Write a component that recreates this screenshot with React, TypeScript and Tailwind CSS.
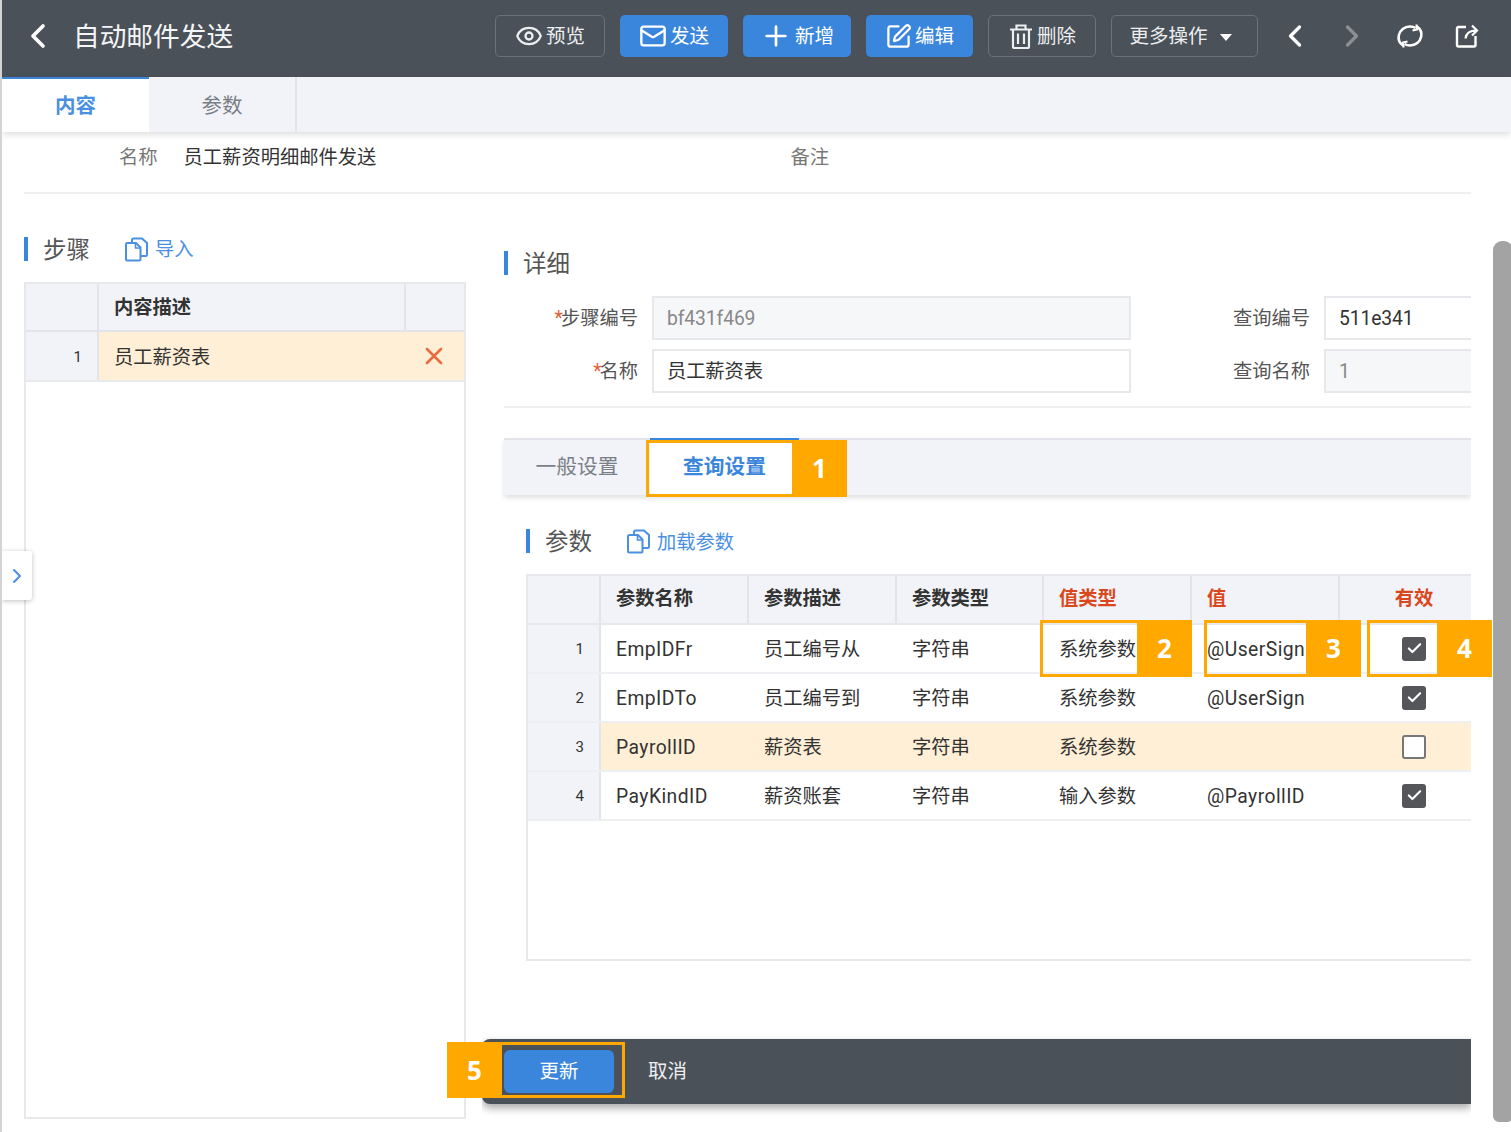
import { Check, ChevronLeft, ChevronRight, Eye, Mail, Plus, SquarePen, X } from "lucide-react";

const FONT = "font-['Roboto','Noto_Sans_CJK_SC',sans-serif]";

type ToolButtonProps = {
  label: string;
  icon?: React.ReactNode;
  primary?: boolean;
  className: string;
};

function ToolButton({ label, icon, primary, className }: ToolButtonProps) {
  return (
    <button
      className={`flex h-[42px] items-center justify-center gap-[3px] rounded-[5px] text-[19.5px] ${
        primary ? "bg-[#3b86dd] text-white" : "border border-[#6b7279] text-[#eceef0]"
      } ${className}`}
    >
      {icon}
      <span className="pt-[2px]">{label}</span>
    </button>
  );
}

function TrashIcon() {
  return (
    <svg width="26" height="28" viewBox="0 0 26 28" fill="none" stroke="currentColor" strokeWidth="2.2">
      <path d="M2 7.500h22M8.500 7V3.500h9V7M5 8v16.500a1.500 1.500 0 0 0 1.500 1.500h13a1.500 1.500 0 0 0 1.500-1.500V8M10 11.500v10.500M16 11.500v10.500" />
    </svg>
  );
}

function RefreshIcon() {
  return (
    <svg width="28" height="28" viewBox="0 0 28 28" fill="none" stroke="currentColor" strokeWidth="2.6">
      <path d="M7 23.500C3.500 21 2 17.500 2.800 13.500C3.800 8 8.500 4.500 14 4.500C16 4.500 18 5 19.500 6" />
      <path d="M21 4.500C24.500 7 26 10.500 25.200 14.500C24.200 20 19.500 23.500 14 23.500C12 23.500 10 23 8.500 22" />
      <path d="M16.500 8.500L21 7.500L20.500 2.500M11.500 19.500L7 20.500L7.500 25.500" strokeWidth="2.2" />
    </svg>
  );
}

function ShareIcon() {
  return (
    <svg width="26" height="26" viewBox="0 0 26 26" fill="none" stroke="currentColor" strokeWidth="2.4">
      <path d="M12 4H4.500A1.500 1.500 0 0 0 3 5.500V22a1.500 1.500 0 0 0 1.500 1.500H20a1.500 1.500 0 0 0 1.500-1.500V13" />
      <path d="M11.500 15.500C12 10.500 15 7.500 22.500 7.500M18 2.500l5 5-5 5" strokeWidth="2.2" />
    </svg>
  );
}

function ImportIcon() {
  return (
    <svg width="25" height="25" viewBox="0 0 25 25" fill="none" stroke="#4a90e2" strokeWidth="2" className="shrink-0">
      <path d="M3.500 6H12l4.500 4.500V22a1.500 1.500 0 0 1-1.500 1.500H3.500A1.500 1.500 0 0 1 2 22V7.500A1.500 1.500 0 0 1 3.500 6Z" />
      <path d="M8 6V3a1.500 1.500 0 0 1 1.500-1.500H18L23 6v11.500a1.500 1.500 0 0 1-1.500 1.500H17" />
      <path d="M11.500 6.500V11H16" strokeWidth="1.600" />
    </svg>
  );
}

function SectionTitle({ label }: { label: string }) {
  return (
    <div className="flex h-[26px] items-center">
      <span className="h-[24px] w-[4px] bg-[#3b86dd]" />
      <span className="ml-[15px] pt-[3px] text-[23.5px] text-[#555]">{label}</span>
    </div>
  );
}

type FieldProps = {
  label: string;
  required?: boolean;
  value: string;
  readOnly?: boolean;
  className: string;
};

function Field({ label, required, value, readOnly, className }: FieldProps) {
  return (
    <div className="flex items-center">
      <label className={`shrink-0 pt-[2px] text-right text-[19.3px] text-[#555] ${className}`}>
        {required && <span className="mr-[-2px] text-[#e2603a]">*</span>}
        {label}
      </label>
      <div
        className={`ml-[14px] flex h-[44px] flex-1 items-center border-2 border-[#e6e8ec] pl-[13px] pt-[3px] text-[19.3px] tracking-[-0.1px] ${
          readOnly ? "bg-[#f6f7f9] text-[#888]" : "bg-white text-[#333]"
        }`}
      >
        {value}
      </div>
    </div>
  );
}

function Checkbox({ checked }: { checked: boolean }) {
  if (!checked) {
    return <span className="h-[24px] w-[24px] rounded-[3px] border-2 border-[#777] bg-white" />;
  }
  return (
    <span className="flex h-[24px] w-[24px] items-center justify-center rounded-[3px] bg-[#555659]">
      <Check size={17} strokeWidth={3} className="text-white" />
    </span>
  );
}

const params = [
  { id: 1, name: "EmpIDFr", desc: "员工编号从", type: "字符串", valueType: "系统参数", value: "@UserSign", on: true },
  { id: 2, name: "EmpIDTo", desc: "员工编号到", type: "字符串", valueType: "系统参数", value: "@UserSign", on: true },
  { id: 3, name: "PayrollID", desc: "薪资表", type: "字符串", valueType: "系统参数", value: "", on: false, active: true },
  { id: 4, name: "PayKindID", desc: "薪资账套", type: "字符串", valueType: "输入参数", value: "@PayrollID", on: true },
];

const headCell = "flex items-center border-r-2 border-[#e2e4ea] pl-[15px] font-bold";
const bodyCell = "flex items-center pl-[15px] pt-[4px]";
const paramCols = "grid grid-cols-[73px_148px_148px_147px_148px_148px_148px]";

function ParamTable() {
  return (
    <div className="h-[387px] w-[960px] border-b-2 border-l-2 border-[#e6e8ec] text-[19.3px] text-[#333]">
      <div className={`${paramCols} h-[51px] border-y-2 border-[#e6e8ec] bg-[#f1f3f8]`}>
        <div className="border-r-2 border-[#e2e4ea]" />
        <div className={headCell}>参数名称</div>
        <div className={headCell}>参数描述</div>
        <div className={headCell}>参数类型</div>
        <div className={`${headCell} text-[#d9481c]`}>值类型</div>
        <div className={`${headCell} text-[#d9481c]`}>值</div>
        <div className="flex items-center justify-center font-bold text-[#d9481c]">有效</div>
      </div>
      {params.map((row) => (
        <div key={row.id} className={`${paramCols} h-[49px] border-b-2 border-[#eeeff2] ${row.active ? "bg-[#ffefd6]" : "bg-white"}`}>
          <div className="flex items-center justify-end border-r-2 border-[#e2e4ea] bg-[#f1f3f8] pr-[15px] pt-[1px] text-[15px]">{row.id}</div>
          <div className={`${bodyCell} tracking-[0.45px]`}>{row.name}</div>
          <div className={bodyCell}>{row.desc}</div>
          <div className={bodyCell}>{row.type}</div>
          <div className={bodyCell}>{row.valueType}</div>
          <div className={`${bodyCell} tracking-[0.45px]`}>{row.value}</div>
          <div className="flex items-center justify-center">
            <Checkbox checked={row.on} />
          </div>
        </div>
      ))}
    </div>
  );
}

function Callout({ num, left, className }: { num: number; left?: boolean; className: string }) {
  return (
    <div className={`absolute flex border-[3px] border-[#ffa800] ${left ? "justify-start" : "justify-end"} ${className}`}>
      <span
        className={`flex h-full w-[55px] shrink-0 items-center justify-center bg-[#ffa800] font-['Open_Sans'] text-[26px] font-bold text-white ${
          left ? "-ml-[3px]" : "-mr-[3px]"
        }`}
      >
        {num}
      </span>
    </div>
  );
}

export default function App() {
  return (
    <div className={`relative h-[1132px] w-[1511px] overflow-hidden border-l-2 border-[#d4d4d4] bg-white ${FONT}`}>
      <header className="flex h-[77px] items-center bg-[#4a5158] pb-[5px] text-white">
        <ChevronLeft size={40} strokeWidth={2.2} className="ml-[16px] shrink-0" />
        <h1 className="ml-[15px] w-[422px] pt-[3px] text-[26.7px] text-[#f4f5f6]">自动邮件发送</h1>
        <ToolButton label="预览" className="w-[110px]" icon={<Eye size={28} strokeWidth={2} />} />
        <ToolButton label="发送" primary className="ml-[15px] w-[108px]" icon={<Mail size={28} strokeWidth={2} />} />
        <ToolButton label="新增" primary className="ml-[15px] w-[108px]" icon={<Plus size={32} strokeWidth={2} />} />
        <ToolButton label="编辑" primary className="ml-[15px] w-[107px]" icon={<SquarePen size={27} strokeWidth={2} />} />
        <ToolButton label="删除" className="ml-[15px] w-[108px]" icon={<TrashIcon />} />
        <button className="ml-[15px] flex h-[42px] w-[147px] items-center justify-center gap-[12px] rounded-[5px] border border-[#6b7279] pr-[8px] pt-[2px] text-[19.5px] text-[#eceef0]">
          更多操作
          <span className="h-0 w-0 border-x-[6px] border-t-[7px] border-x-transparent border-t-white" />
        </button>
        <ChevronLeft size={36} strokeWidth={2.2} className="ml-[19px] shrink-0" />
        <ChevronRight size={36} strokeWidth={2.2} className="ml-[21px] shrink-0 text-[#8a9096]" />
        <span className="ml-[26px] shrink-0"><RefreshIcon /></span>
        <span className="ml-[30px] shrink-0"><ShareIcon /></span>
      </header>

      <nav className="relative z-10 flex h-[55px] bg-[#f1f3f8] text-[20.5px] shadow-[0_3px_6px_rgba(0,0,0,0.12)]">
        <div className="flex w-[147px] items-center justify-center border-t-2 border-[#3b86dd] bg-white pt-[2px] font-bold text-[#4a90e2]">内容</div>
        <div className="flex w-[148px] items-center justify-center border-r-2 border-[#e2e4ea] pt-[4px] text-[#7b8087]">参数</div>
      </nav>

      <div className="mx-[22px] flex h-[62px] w-[1447px] border-b-2 border-[#eeeff1] pt-[12px] text-[19.3px]">
        <span className="ml-[95px] text-[#777]">名称</span>
        <span className="ml-[26px] w-[607px] text-[#333]">员工薪资明细邮件发送</span>
        <span className="text-[#777]">备注</span>
      </div>

      <div className="flex">
        <aside className="ml-[22px] w-[442px] shrink-0 pt-[42px]">
          <div className="flex h-[26px] items-center">
            <SectionTitle label="步骤" />
            <span className="ml-[34px] flex items-center gap-[6px] pt-[1px] text-[19.3px] text-[#4a90e2]">
              <ImportIcon />
              <span className="pt-[1px]">导入</span>
            </span>
          </div>
          <div className="mt-[20px] h-[837px] border-2 border-[#e6e8ec] text-[19.3px] text-[#333]">
            <div className="grid h-[48px] grid-cols-[73px_307px_1fr] border-b-2 border-[#e2e4ea] bg-[#f1f3f8]">
              <div className="border-r-2 border-[#e2e4ea]" />
              <div className="flex items-center border-r-2 border-[#e2e4ea] pl-[15px] pt-[2px] font-bold">内容描述</div>
              <div />
            </div>
            <div className="grid h-[50px] grid-cols-[73px_1fr] border-b-2 border-[#e9eaee]">
              <div className="flex items-center justify-end border-r-2 border-[#e2e4ea] bg-[#f1f3f8] pr-[15px] pt-[2px] text-[15px]">1</div>
              <div className="flex items-center justify-between bg-[#ffefd6] pl-[15px] pr-[16px]">
                <span className="pt-[5px]">员工薪资表</span>
                <X size={28} strokeWidth={2.2} className="text-[#ec6a3f]" />
              </div>
            </div>
          </div>
        </aside>

        <main className="ml-[16px] w-[989px] shrink-0 overflow-hidden pb-[20px]">
          <div className="ml-[22px] pt-[56px]">
            <SectionTitle label="详细" />
            <div className="mt-[20px] grid grid-cols-[627px_360px] gap-y-[9px] border-b-2 border-[#eeeff1] pb-[13px]">
              <Field label="步骤编号" required value="bf431f469" readOnly className="w-[134px]" />
              <Field label="查询编号" value="511e341" className="w-[179px]" />
              <Field label="名称" required value="员工薪资表" className="w-[134px]" />
              <Field label="查询名称" value="1" readOnly className="w-[179px]" />
            </div>
            <div className="mt-[30px] flex h-[57px] border-t-2 border-[#e2e4ea] bg-[#f1f3f8] text-[20.7px] shadow-[0_3px_5px_rgba(0,0,0,0.12)]">
              <div className="flex w-[146px] items-center justify-center text-[#7b8087]">一般设置</div>
              <div className="-mt-[2px] flex w-[149px] items-center justify-center border-t-2 border-[#3b86dd] bg-white font-bold text-[#3b86dd]">查询设置</div>
            </div>
            <div className="ml-[22px] mt-[33px] flex h-[26px] items-center">
              <SectionTitle label="参数" />
              <span className="ml-[34px] flex items-center gap-[6px] pt-[1px] text-[19.3px] text-[#4a90e2]">
                <ImportIcon />
                <span className="pt-[3px]">加载参数</span>
              </span>
            </div>
            <div className="ml-[22px] mt-[20px]">
              <ParamTable />
            </div>
          </div>
          <div className="mt-[78px] flex h-[65px] items-center rounded-l-[8px] bg-[#4a5158] pl-[22px] shadow-[0_4px_8px_rgba(0,0,0,0.35)]">
            <button className="h-[43px] w-[110px] rounded-[6px] bg-[#3b86dd] text-[19.5px] text-white">更新</button>
            <button className="ml-[34px] text-[19.5px] text-[#eceef0]">取消</button>
          </div>
        </main>
      </div>

      <button className="absolute left-0 top-[551px] flex h-[49px] w-[30px] items-center justify-center rounded-r-[3px] bg-white shadow-[0_1px_5px_rgba(0,0,0,0.25)]">
        <ChevronRight size={24} strokeWidth={2} className="text-[#4a90e2]" />
      </button>
      <div className="absolute left-[1491px] top-[241px] h-[881px] w-[20px] rounded-t-[9px] rounded-b-[6px] bg-[#a3a3a3]" />

      <Callout num={1} className="left-[644px] top-[440px] h-[57px] w-[201px]" />
      <Callout num={2} className="left-[1038px] top-[620px] h-[57px] w-[152px]" />
      <Callout num={3} className="left-[1202px] top-[620px] h-[57px] w-[157px]" />
      <Callout num={4} className="left-[1365px] top-[620px] h-[57px] w-[125px]" />
      <Callout num={5} left className="left-[445px] top-[1042px] h-[56px] w-[178px]" />
    </div>
  );
}
